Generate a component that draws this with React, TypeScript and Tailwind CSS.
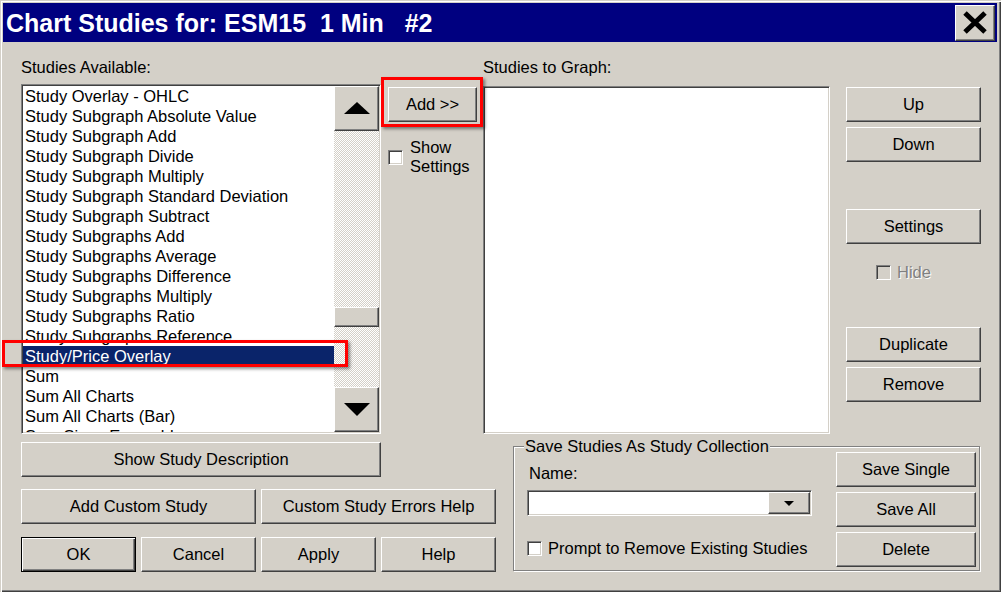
import clsx from "clsx";

const studies = [
  "Study Overlay - OHLC",
  "Study Subgraph Absolute Value",
  "Study Subgraph Add",
  "Study Subgraph Divide",
  "Study Subgraph Multiply",
  "Study Subgraph Standard Deviation",
  "Study Subgraph Subtract",
  "Study Subgraphs Add",
  "Study Subgraphs Average",
  "Study Subgraphs Difference",
  "Study Subgraphs Multiply",
  "Study Subgraphs Ratio",
  "Study Subgraphs Reference",
  "Study/Price Overlay",
  "Sum",
  "Sum All Charts",
  "Sum All Charts (Bar)",
  "Sum Since Ensemble",
];

const SELECTED = "Study/Price Overlay";

const raised =
  "bg-[#d4d0c8] border border-t-white border-l-white border-r-[#404040] border-b-[#404040] shadow-[inset_-1px_-1px_#808080]";
const sunken =
  "border border-t-[#808080] border-l-[#808080] border-r-white border-b-white p-px shadow-[inset_1px_1px_#404040,inset_-1px_-1px_#d4d0c8]";

type BtnProps = {
  label: string;
  className?: string;
  isDefault?: boolean;
};

const Btn = ({ label, className = "", isDefault = false }: BtnProps) => (
  <button
    type="button"
    className={clsx(
      "flex items-center justify-center text-[16.5px] leading-none text-black h-[35px] shrink-0",
      isDefault
        ? "bg-[#d4d0c8] border border-black shadow-[inset_1px_1px_#fff,inset_-1px_-1px_#404040,inset_-2px_-2px_#808080]"
        : raised,
      className
    )}
  >
    {label}
  </button>
);

const CheckBox = ({ disabled = false }: { disabled?: boolean }) => (
  <div className={clsx("w-[15px] h-[15px] shrink-0", sunken, disabled ? "bg-[#d4d0c8]" : "bg-white")} />
);

const Arrow = ({ down = false }: { down?: boolean }) => (
  <svg width="26" height="13" viewBox="0 0 26 13">
    {down ? <polygon points="0,0 26,0 13,13" fill="#000" /> : <polygon points="13,0 26,12 0,12" fill="#000" />}
  </svg>
);

// red annotation frames drawn over the dialog
const RedMark = ({ className }: { className: string }) => (
  <div className={clsx("absolute border-[3px] border-[#ff0000] shadow-[2px_2px_3px_rgba(0,0,0,0.45)] pointer-events-none", className)} />
);

const App = () => {
  return (
    <div className="w-[1001px] h-[592px] bg-[#d4d0c8] p-[3px] flex flex-col font-['Liberation_Sans',Arial,sans-serif] text-black shadow-[inset_1px_1px_#d4d0c8,inset_2px_2px_#fff,inset_-1px_-1px_#404040,inset_-2px_-2px_#808080] overflow-hidden">
      {/* title bar */}
      <div className="h-[39px] w-[994px] bg-[#000080] flex items-center justify-between pl-[3px] pr-[2px]">
        <span className="text-white font-bold text-[25px] whitespace-pre pt-[2px]">Chart Studies for: ESM15  1 Min   #2</span>
        <div className={clsx(raised, "w-[40px] h-[36px] flex items-center justify-center")}>
          <svg width="24" height="23" viewBox="0 0 24 23">
            <path d="M2 2 L22 21 M22 2 L2 21" stroke="#000" strokeWidth="5" />
          </svg>
        </div>
      </div>

      {/* upper part */}
      <div className="flex pl-[18px] h-[392px]">
        {/* studies available */}
        <div className="relative w-[360px] pt-[15px] flex flex-col">
          <div className="text-[16.5px] leading-[20px] h-[20px]">Studies Available:</div>
          <div className={clsx(sunken, "mt-[7px] h-[350px] bg-white flex")}>
            <div className="flex-1 overflow-hidden">
              {studies.map((s) => (
                <div
                  key={s}
                  className={clsx(
                    "h-[20px] leading-[20px] text-[16.5px] pl-[2px] whitespace-nowrap",
                    s === SELECTED ? "bg-[#0a246a] text-white" : ""
                  )}
                >
                  {s}
                </div>
              ))}
            </div>
            <div className="w-[45px] flex flex-col">
              <div className={clsx(raised, "h-[45px] flex items-center justify-center")}>
                <Arrow />
              </div>
              <div className="flex-1 bg-[image:repeating-conic-gradient(#ffffff_0_25%,#d4d0c8_0_50%)] bg-[length:2px_2px] flex flex-col">
                <div className="h-[176px]" />
                <div className={clsx(raised, "h-[20px]")} />
              </div>
              <div className={clsx(raised, "h-[45px] flex items-center justify-center")}>
                <Arrow down />
              </div>
            </div>
          </div>
          <RedMark className="left-[-19px] top-[298px] w-[346px] h-[27px]" />
        </div>

        {/* add column */}
        <div className="w-[102px] pt-[45px] pl-[7px] flex flex-col">
          <div className="relative w-[89px]">
            <Btn label="Add >>" className="w-[89px]" />
            <RedMark className="left-[-7px] top-[-10px] right-[-6px] bottom-[-5px]" />
          </div>
          <div className="mt-[16px] flex items-center gap-[7px]">
            <CheckBox />
            <div className="text-[16.5px] leading-[19px]">
              Show
              <br />
              Settings
            </div>
          </div>
        </div>

        {/* studies to graph */}
        <div className="w-[347px] pt-[15px] flex flex-col">
          <div className="text-[16.5px] leading-[20px] h-[20px]">Studies to Graph:</div>
          <div className={clsx(sunken, "mt-[9px] h-[348px] bg-white")} />
        </div>

        {/* right buttons */}
        <div className="ml-[16px] w-[135px] pt-[45px] flex flex-col">
          <Btn label="Up" />
          <Btn label="Down" className="mt-[5px]" />
          <Btn label="Settings" className="mt-[47px]" />
          <div className="mt-[18px] h-[20px] flex items-center gap-[6px] pl-[30px]">
            <CheckBox disabled />
            <span className="text-[16.5px] text-[#808080] [text-shadow:1px_1px_0_#fff]">Hide</span>
          </div>
          <Btn label="Duplicate" className="mt-[45px]" />
          <Btn label="Remove" className="mt-[5px]" />
        </div>
      </div>

      {/* lower part */}
      <div className="flex pl-[18px] pt-[8px]">
        <div className="w-[475px] flex flex-col">
          <Btn label="Show Study Description" className="w-[360px]" />
          <div className="mt-[12px] flex gap-[5px]">
            <Btn label="Add Custom Study" className="w-[235px]" />
            <Btn label="Custom Study Errors Help" className="w-[235px]" />
          </div>
          <div className="mt-[13px] flex gap-[5px]">
            <Btn label="OK" className="w-[115px]" isDefault />
            <Btn label="Cancel" className="w-[115px]" />
            <Btn label="Apply" className="w-[115px]" />
            <Btn label="Help" className="w-[115px]" />
          </div>
        </div>

        <div className="relative ml-[17px] mt-[4px] w-[467px] h-[125px] border border-[#808080] shadow-[1px_1px_0_#fff,inset_1px_1px_0_#fff] flex">
          <span className="absolute left-[10px] top-[-11px] px-[1px] bg-[#d4d0c8] text-[16.5px] leading-[20px] whitespace-nowrap">
            Save Studies As Study Collection
          </span>
          <div className="pl-[13px] flex flex-col">
            <div className="mt-[16px] pl-[2px] h-[20px] text-[16.5px] leading-[20px]">Name:</div>
            <div className={clsx(sunken, "mt-[7px] w-[285px] h-[26px] bg-white flex justify-end")}>
              <div className={clsx(raised, "w-[42px] h-[22px] flex items-center justify-center")}>
                <svg width="10" height="5" viewBox="0 0 10 5">
                  <polygon points="0,0 10,0 5,5" fill="#000" />
                </svg>
              </div>
            </div>
            <div className="mt-[22px] h-[20px] flex items-center gap-[6px]">
              <CheckBox />
              <span className="text-[16.5px] whitespace-nowrap">Prompt to Remove Existing Studies</span>
            </div>
          </div>
          <div className="ml-auto mr-[3px] pt-[5px] w-[140px] flex flex-col gap-[5px]">
            <Btn label="Save Single" />
            <Btn label="Save All" />
            <Btn label="Delete" />
          </div>
        </div>
      </div>
    </div>
  );
};

export default App;
